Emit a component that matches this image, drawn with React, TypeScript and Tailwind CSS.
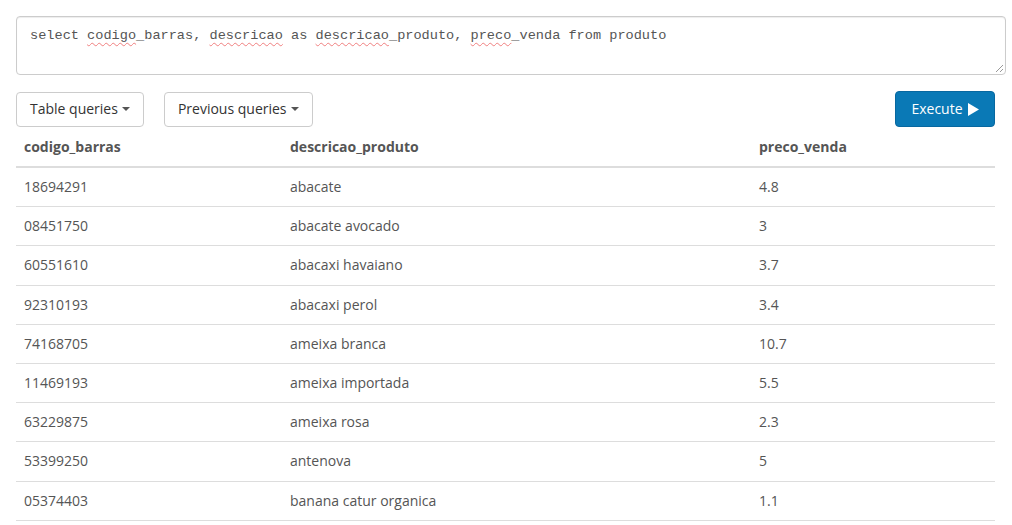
import React from "react";

const rows: [string, string, string][] = [
  ["18694291", "abacate", "4.8"],
  ["08451750", "abacate avocado", "3"],
  ["60551610", "abacaxi havaiano", "3.7"],
  ["92310193", "abacaxi perol", "3.4"],
  ["74168705", "ameixa branca", "10.7"],
  ["11469193", "ameixa importada", "5.5"],
  ["63229875", "ameixa rosa", "2.3"],
  ["53399250", "antenova", "5"],
  ["05374403", "banana catur organica", "1.1"],
];

function Caret() {
  return (
    <span className="inline-block ml-[4px] align-middle w-0 h-0 border-l-[4px] border-r-[4px] border-t-[4px] border-l-transparent border-r-transparent border-t-[#555]" />
  );
}

export default function App() {
  const sq = "underline decoration-wavy decoration-[#f08080] decoration-[1px] underline-offset-[3px]";
  return (
    <div className="w-[1012px] h-[525px] overflow-hidden bg-white text-[#555] text-[14px]" style={{ fontFamily: '"Open Sans", sans-serif' }}>
      <div className="pt-[16px] pl-[16px] pr-[6px]">
        <div className="relative h-[59px] border border-[#ccc] rounded-[4px] shadow-[inset_0_1px_1px_rgba(0,0,0,0.075)] px-[13px] pt-[9px] text-[13.6px] leading-[20px] text-[#555]" style={{ fontFamily: '"Liberation Mono", monospace' }}>
          select <span className={sq}>codigo</span>_barras, <span className={sq}>descricao</span> as <span className={sq}>descricao</span>_produto, <span className={sq}>preco</span>_venda from produto
          <svg className="absolute right-[1px] bottom-[1px]" width="10" height="10" viewBox="0 0 10 10">
            <line x1="9" y1="2" x2="2" y2="9" stroke="#999" strokeWidth="1" />
            <line x1="9" y1="6" x2="6" y2="9" stroke="#999" strokeWidth="1" />
          </svg>
        </div>
      </div>
      <div className="px-[16px] pr-[17px]">
        <div className="flex items-center mt-[16px] h-[36px]">
          <button className="h-[35px] px-[13px] border border-[#ccc] rounded-[4px] bg-white text-[#333] leading-[20px] flex items-center">
            Table queries<Caret />
          </button>
          <button className="ml-[20px] h-[35px] px-[13px] border border-[#ccc] rounded-[4px] bg-white text-[#333] leading-[20px] flex items-center">
            Previous queries<Caret />
          </button>
          <div className="flex-1" />
          <button className="h-[36px] w-[100px] rounded-[4px] bg-[#0a79b6] border border-[#0868a0] text-white leading-[20px] flex items-center justify-center">
            Execute
            <svg className="ml-[5px]" width="11" height="13" viewBox="0 0 11 13">
              <polygon points="0,0 11,6.5 0,13" fill="white" />
            </svg>
          </button>
        </div>
        <div className="grid grid-cols-[266px_469px_244px]">
          <div className="px-[8px] pt-[9px] pb-[8px] leading-[22px] font-bold border-b-2 border-[#ddd]">codigo_barras</div>
          <div className="px-[8px] pt-[9px] pb-[8px] leading-[22px] font-bold border-b-2 border-[#ddd]">descricao_produto</div>
          <div className="px-[8px] pt-[9px] pb-[8px] leading-[22px] font-bold border-b-2 border-[#ddd]">preco_venda</div>
          {rows.map((r, i) => (
            <React.Fragment key={i}>
              {r.map((c, j) => (
                <div key={j} className="px-[8px] pt-[8px] pb-[8px] leading-[22.2px] border-b border-[#ddd]">
                  {c}
                </div>
              ))}
            </React.Fragment>
          ))}
        </div>
      </div>
    </div>
  );
}
